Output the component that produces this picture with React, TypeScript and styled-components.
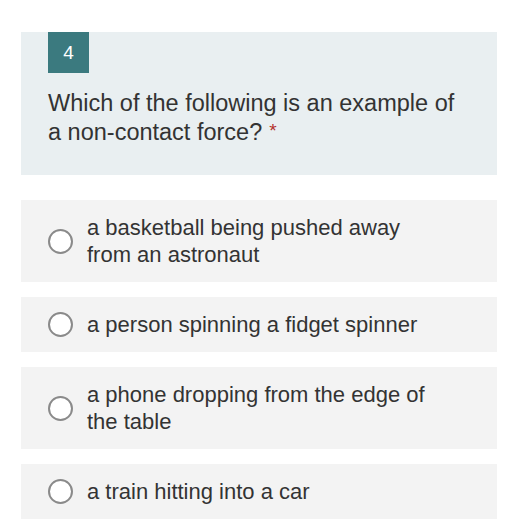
import React from "react";
import styled, { createGlobalStyle } from "styled-components";

const Global = createGlobalStyle`
  html, body { margin: 0; padding: 0; background: #ffffff; }
  body { font-family: "Liberation Sans", Arial, sans-serif; color: #333333; }
`;

const Page = styled.div`
  padding: 32px 21px 0 21px;
  width: 476px;
  display: flex;
  flex-direction: column;
`;

const QuestionPanel = styled.div`
  background: #e9eff1;
  padding: 0 27px 28px 27px;
  display: flex;
  flex-direction: column;
  align-items: flex-start;
`;

const Badge = styled.div`
  width: 41px;
  height: 41px;
  background: #3b7a7f;
  color: #ffffff;
  font-size: 19px;
  display: flex;
  align-items: center;
  justify-content: center;
`;

const QuestionText = styled.div`
  margin-top: 16px;
  font-size: 23.5px;
  line-height: 29px;
  color: #333333;
`;

const Required = styled.span`
  color: #b3312c;
  font-size: 19px;
  line-height: 0;
  margin-left: 7px;
  vertical-align: 3px;
`;

const Options = styled.div`
  margin-top: 25px;
  display: flex;
  flex-direction: column;
  gap: 15px;
`;

const Option = styled.label`
  background: #f3f3f3;
  padding: 14px 20px 14px 27px;
  display: flex;
  align-items: center;
  gap: 14px;
`;

const Radio = styled.span`
  flex: none;
  width: 21px;
  height: 21px;
  border: 2px solid #8a8a8a;
  border-radius: 50%;
  background: #ffffff;
`;

const OptionText = styled.span`
  font-size: 22px;
  line-height: 27px;
  color: #333333;
`;

const options = [
  ["a basketball being pushed away", "from an astronaut"],
  ["a person spinning a fidget spinner"],
  ["a phone dropping from the edge of", "the table"],
  ["a train hitting into a car"],
];

export default function App() {
  return (
    <>
      <Global />
      <Page>
        <QuestionPanel>
          <Badge>4</Badge>
          <QuestionText>
            Which of the following is an example of
            <br />
            a non-contact force?<Required>*</Required>
          </QuestionText>
        </QuestionPanel>
        <Options>
          {options.map((lines, i) => (
            <Option key={i}>
              <Radio />
              <OptionText>
                {lines.map((l, j) => (
                  <React.Fragment key={j}>
                    {j > 0 && <br />}
                    {l}
                  </React.Fragment>
                ))}
              </OptionText>
            </Option>
          ))}
        </Options>
      </Page>
    </>
  );
}
